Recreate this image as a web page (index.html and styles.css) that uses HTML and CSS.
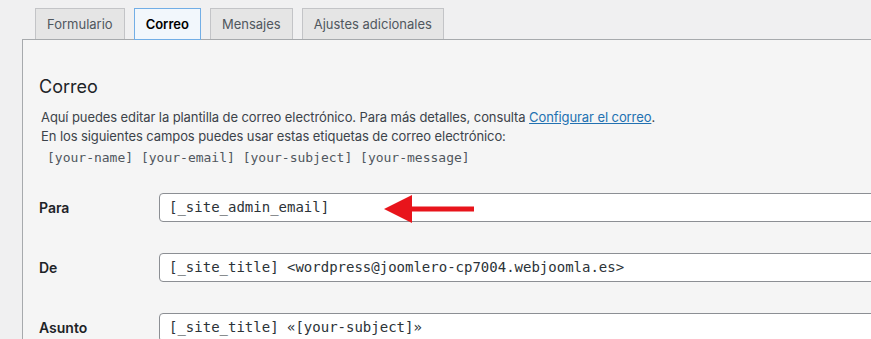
FILE: index.html
```html
<!DOCTYPE html>
<html lang="es">
<head>
    <meta charset="UTF-8">
    <meta name="viewport" content="width=device-width, initial-scale=1.0">
    <title>Correo</title>
    <link rel="stylesheet" href="styles.css">
</head>
<body>
    <!-- Tabs -->
    <nav class="nav-tabs">
        <a class="nav-tab">Formulario</a>
        <a class="nav-tab active">Correo</a>
        <a class="nav-tab">Mensajes</a>
        <a class="nav-tab">Ajustes adicionales</a>
    </nav>

    <!-- Mail panel -->
    <div class="panel">
        <h2 class="panel-title">Correo</h2>
        <p class="description">Aquí puedes editar la plantilla de correo electrónico. Para más detalles, consulta <a href="#">Configurar el correo</a>.<br>En los siguientes campos puedes usar estas etiquetas de correo electrónico:</p>
        <p class="mail-tags">[your-name] [your-email] [your-subject] [your-message]</p>

        <div class="form-row">
            <label class="form-label">Para</label>
            <div class="field">
                <div class="text-input">[_site_admin_email]</div>
                <svg class="arrow" width="92" height="30" viewBox="0 0 92 30">
                    <polygon points="0,15 28,1 28,29" fill="#e8141b"/>
                    <rect x="26" y="12.5" width="64" height="5" fill="#e8141b"/>
                </svg>
            </div>
        </div>
        <div class="form-row">
            <label class="form-label">De</label>
            <div class="field">
                <div class="text-input">[_site_title] &lt;wordpress@joomlero-cp7004.webjoomla.es&gt;</div>
            </div>
        </div>
        <div class="form-row">
            <label class="form-label">Asunto</label>
            <div class="field">
                <div class="text-input">[_site_title] «[your-subject]»</div>
            </div>
        </div>
    </div>
</body>
</html>
```

FILE: styles.css
```css
body {
    margin: 0;
    background-color: #f0f0f1;
    font-family: Inter, "Liberation Sans", sans-serif;
    color: #1d2327;
    overflow: hidden;
}
.nav-tabs {
    display: flex;
    gap: 9px;
    padding: 8px 0 0 35px;
}
.nav-tab {
    display: block;
    height: 30px;
    line-height: 30px;
    padding: 0 11px;
    font-size: 13px;
    color: #50575e;
    background-color: #e5e5e5;
    border: 1px solid #c3c4c7;
    border-bottom: none;
}
.nav-tab.active {
    color: #000;
    font-weight: 600;
    background-color: #f2f7fc;
    border-color: #72aee6;
    border-bottom: 1px solid #72aee6;
    position: relative;
    z-index: 1;
    margin-bottom: -1px;
}
.panel {
    margin-left: 22px;
    width: 1000px;
    height: 400px;
    padding: 0 16px;
    background-color: #f5f5f5;
    border-top: 1px solid #a7aaad;
    border-left: 1px solid #a7aaad;
}
.panel-title {
    margin: 36px 0 11px;
    font-size: 18px;
    font-weight: 400;
    color: #1d2327;
}
.description {
    margin: 0;
    padding-left: 2px;
    font-size: 13px;
    letter-spacing: -0.09px;
    line-height: 19px;
    color: #3c434a;
}
.description a {
    color: #2271b1;
}
.mail-tags {
    margin: 2px 0 0;
    padding-left: 8px;
    font-family: "DejaVu Sans Mono", monospace;
    font-size: 13px;
    line-height: 19px;
    color: #50575e;
}
.form-row {
    display: flex;
    align-items: center;
    margin-top: 26px;
    height: 29px;
}
.form-row + .form-row {
    margin-top: 31px;
}
.form-label {
    width: 120px;
    font-size: 14px;
    font-weight: 600;
}
.field {
    position: relative;
    flex: 1;
}
.text-input {
    box-sizing: border-box;
    height: 29px;
    padding: 0 9px;
    font-family: "DejaVu Sans Mono", monospace;
    font-size: 14px;
    line-height: 26px;
    white-space: nowrap;
    color: #2c3338;
    background-color: #fff;
    border: 1px solid #8c8f94;
    border-radius: 4px;
}
.arrow {
    position: absolute;
    left: 225px;
    top: 1px;
}
```
